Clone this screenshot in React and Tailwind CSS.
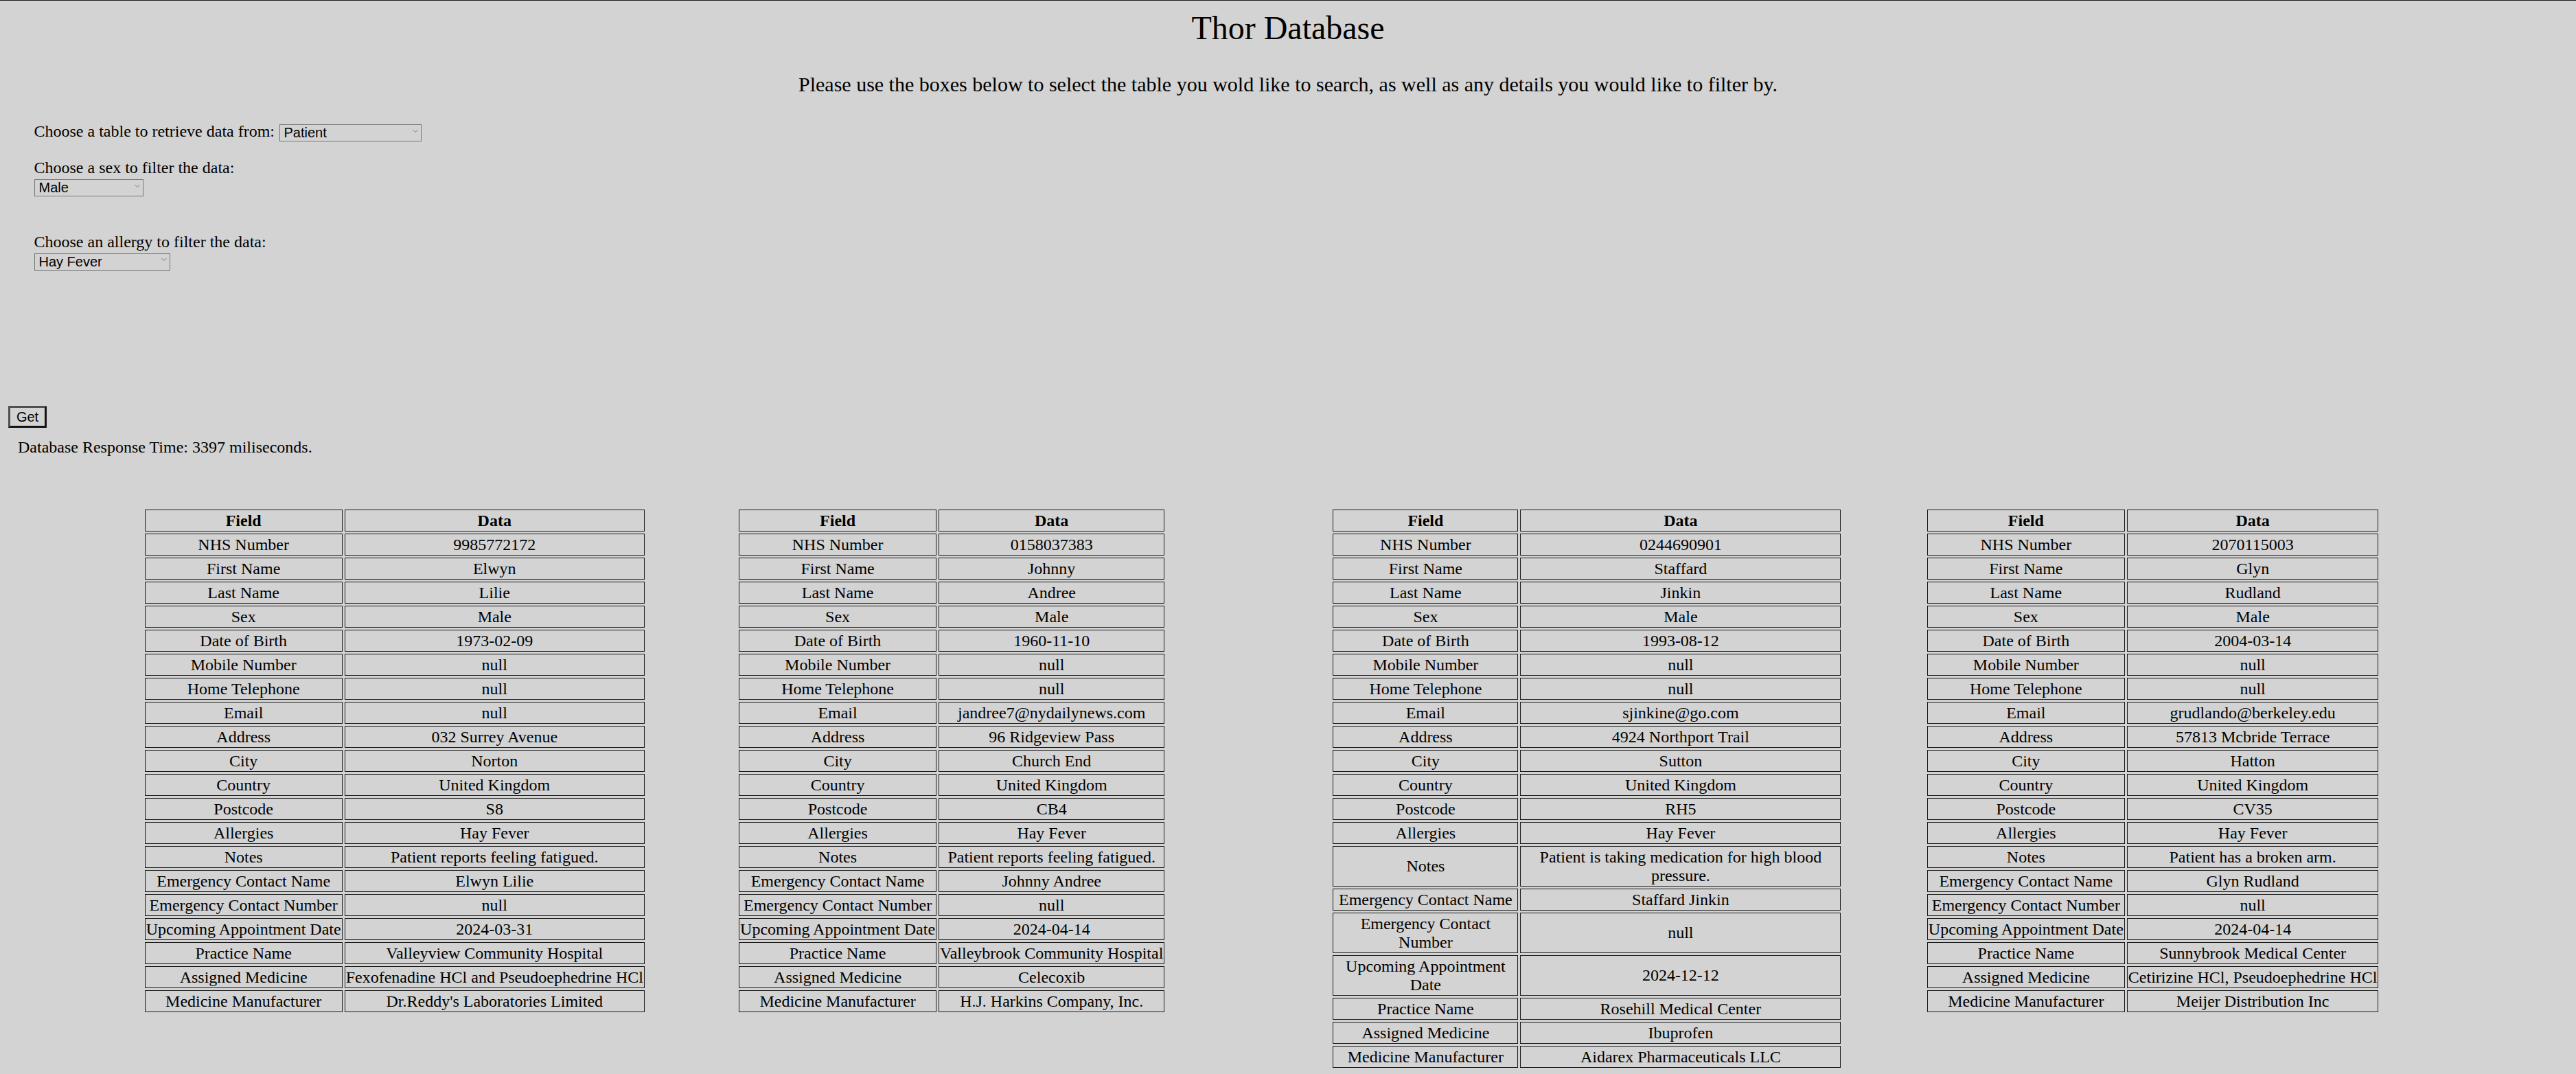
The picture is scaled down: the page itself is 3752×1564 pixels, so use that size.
import React from 'react';

const FIELDS = [
  'NHS Number',
  'First Name',
  'Last Name',
  'Sex',
  'Date of Birth',
  'Mobile Number',
  'Home Telephone',
  'Email',
  'Address',
  'City',
  'Country',
  'Postcode',
  'Allergies',
  'Notes',
  'Emergency Contact Name',
  'Emergency Contact Number',
  'Upcoming Appointment Date',
  'Practice Name',
  'Assigned Medicine',
  'Medicine Manufacturer',
];

const patients = [
  ['9985772172', 'Elwyn', 'Lilie', 'Male', '1973-02-09', 'null', 'null', 'null', '032 Surrey Avenue', 'Norton', 'United Kingdom', 'S8', 'Hay Fever', 'Patient reports feeling fatigued.', 'Elwyn Lilie', 'null', '2024-03-31', 'Valleyview Community Hospital', 'Fexofenadine HCl and Pseudoephedrine HCl', "Dr.Reddy's Laboratories Limited"],
  ['0158037383', 'Johnny', 'Andree', 'Male', '1960-11-10', 'null', 'null', 'jandree7@nydailynews.com', '96 Ridgeview Pass', 'Church End', 'United Kingdom', 'CB4', 'Hay Fever', 'Patient reports feeling fatigued.', 'Johnny Andree', 'null', '2024-04-14', 'Valleybrook Community Hospital', 'Celecoxib', 'H.J. Harkins Company, Inc.'],
  ['0244690901', 'Staffard', 'Jinkin', 'Male', '1993-08-12', 'null', 'null', 'sjinkine@go.com', '4924 Northport Trail', 'Sutton', 'United Kingdom', 'RH5', 'Hay Fever', 'Patient is taking medication for high blood pressure.', 'Staffard Jinkin', 'null', '2024-12-12', 'Rosehill Medical Center', 'Ibuprofen', 'Aidarex Pharmaceuticals LLC'],
  ['2070115003', 'Glyn', 'Rudland', 'Male', '2004-03-14', 'null', 'null', 'grudlando@berkeley.edu', '57813 Mcbride Terrace', 'Hatton', 'United Kingdom', 'CV35', 'Hay Fever', 'Patient has a broken arm.', 'Glyn Rudland', 'null', '2024-04-14', 'Sunnybrook Medical Center', 'Cetirizine HCl, Pseudoephedrine HCl', 'Meijer Distribution Inc'],
];

const Chevron = () => (
  <svg
    className="pointer-events-none absolute right-[5px] top-1/2 -translate-y-1/2"
    width="8"
    height="5"
    viewBox="0 0 8 5"
    fill="none"
  >
    <polyline points="0.5,0.5 4,4 7.5,0.5" stroke="#7a7a7a" strokeWidth="1" />
  </svg>
);

const Select = ({ value, options, width }) => (
  <div className={`relative h-[25px] ${width}`}>
    <select
      defaultValue={value}
      className="h-full w-full appearance-none rounded-none border border-[#767676] bg-transparent pl-[6px] pr-[16px] font-['Liberation_Sans',Arial,sans-serif] text-[20px] leading-[23px] text-black outline-none"
    >
      {options.map((o) => (
        <option key={o}>{o}</option>
      ))}
    </select>
    <Chevron />
  </div>
);

const PatientTable = ({ row }) => (
  <table className="border-separate border-spacing-[3px] text-center text-[24px] leading-[27px]">
    <thead>
      <tr>
        <th className="border border-[#1a1a1a] px-px py-[1.5px] font-bold">Field</th>
        <th className="border border-[#1a1a1a] px-px py-[1.5px] font-bold">Data</th>
      </tr>
    </thead>
    <tbody>
      {FIELDS.map((f, i) => (
        <tr key={f}>
          <td className="border border-[#1a1a1a] px-px py-[1.5px]">{f}</td>
          <td className="border border-[#1a1a1a] px-px py-[1.5px]">{row[i]}</td>
        </tr>
      ))}
    </tbody>
  </table>
);

export default function App() {
  return (
    <div className="flex min-h-screen flex-col border-t border-[#1e1e1e] bg-[#d3d3d3] font-['Liberation_Serif','Times_New_Roman',serif] text-black">
      <h1 className="mt-[11.5px] text-center text-[48px] font-normal leading-[56px]">Thor Database</h1>
      <p className="mt-[37.7px] text-center text-[30px] leading-[34px]">
        Please use the boxes below to select the table you wold like to search, as well as any details you would like to filter by.
      </p>

      <div className="ml-[49.5px] flex flex-col items-start text-[24px] leading-[28px]">
        <div className="mt-[36.7px] flex h-[28px] items-center gap-[6.5px]">
          <label>Choose a table to retrieve data from:</label>
          <Select value="Patient" options={['Patient', 'Practice', 'Medicine']} width="w-[207px]" />
        </div>

        <label className="mt-[25.3px]">Choose a sex to filter the data:</label>
        <Select value="Male" options={['Male', 'Female']} width="w-[159px]" />

        <label className="mt-[54.7px]">Choose an allergy to filter the data:</label>
        <Select value="Hay Fever" options={['Hay Fever', 'Penicillin', 'Peanuts']} width="w-[198px]" />
      </div>

      <button className="ml-[12px] mt-[200px] h-[32px] w-[56px] self-start border-[3px] border-b-[#141414] border-l-[#505050] border-r-[#141414] border-t-[#505050] bg-[#d3d3d3] font-['Liberation_Sans',Arial,sans-serif] text-[20px] leading-[24px]">
        Get
      </button>

      <p className="ml-[26px] mt-[14.2px] text-[24px] leading-[28px]">Database Response Time: 3397 miliseconds.</p>

      <div className="mt-[74px] grid grid-cols-[repeat(4,746px)] items-start gap-x-[119.4px] pl-[207.7px]">
        {patients.map((p) => (
          <div key={p[0]}>
            <PatientTable row={p} />
          </div>
        ))}
      </div>
    </div>
  );
}
